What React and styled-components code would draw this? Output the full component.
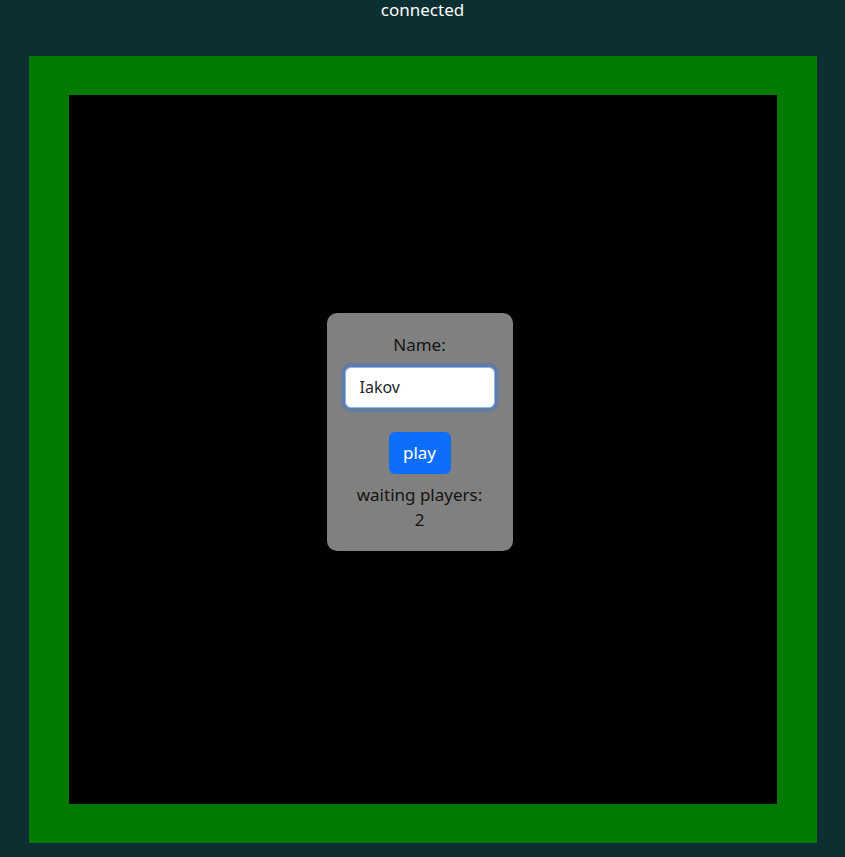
import { useState } from "react";
import styled, { createGlobalStyle } from "styled-components";

const GlobalStyle = createGlobalStyle`
  body {
    margin: 0;
    background: #0c2f32;
    font-family: "Noto Sans", "Open Sans", sans-serif;
  }
`;

const Page = styled.div`
  display: flex;
  flex-direction: column;
  align-items: center;
`;

const Status = styled.div`
  color: white;
  font-size: 17px;
  line-height: 20px;
`;

const Board = styled.div`
  margin-top: 36px;
  width: 788px;
  height: 787px;
  box-sizing: border-box;
  border: solid #007a00;
  border-width: 39px 40px;
  background: black;
  display: flex;
  align-items: center;
  justify-content: center;
  padding: 0 6px 36px 0;
`;

const Card = styled.div`
  width: 186px;
  box-sizing: border-box;
  background: #808080;
  border-radius: 10px;
  padding: 19px 0 19px;
  display: flex;
  flex-direction: column;
  align-items: center;
  color: #141414;
  font-size: 17px;
  line-height: 25px;
`;

const Label = styled.div`
  margin-bottom: 10px;
`;

const Input = styled.input`
  width: 150px;
  height: 41px;
  box-sizing: border-box;
  border: 1px solid #86b7fe;
  border-radius: 6px;
  padding: 0 14px;
  font-family: inherit;
  font-size: 16px;
  color: #212529;
  background: white;
  outline: none;
  box-shadow: 0 0 0 4px rgba(13, 110, 253, 0.25);
`;

const PlayButton = styled.button`
  margin-top: 24px;
  margin-bottom: 8px;
  width: 62px;
  height: 42px;
  border: none;
  border-radius: 6px;
  background: #0d6efd;
  color: white;
  font-family: inherit;
  font-size: 17px;
  cursor: pointer;
`;

const Line = styled.div``;

const App = () => {
  const [name, setName] = useState("Iakov");

  return (
    <>
      <GlobalStyle />
      <Page>
        <Status>connected</Status>
        <Board>
          <Card>
            <Label>Name:</Label>
            <Input value={name} onChange={(e) => setName(e.target.value)} />
            <PlayButton>play</PlayButton>
            <Line>waiting players:</Line>
            <Line>2</Line>
          </Card>
        </Board>
      </Page>
    </>
  );
};

export default App;
